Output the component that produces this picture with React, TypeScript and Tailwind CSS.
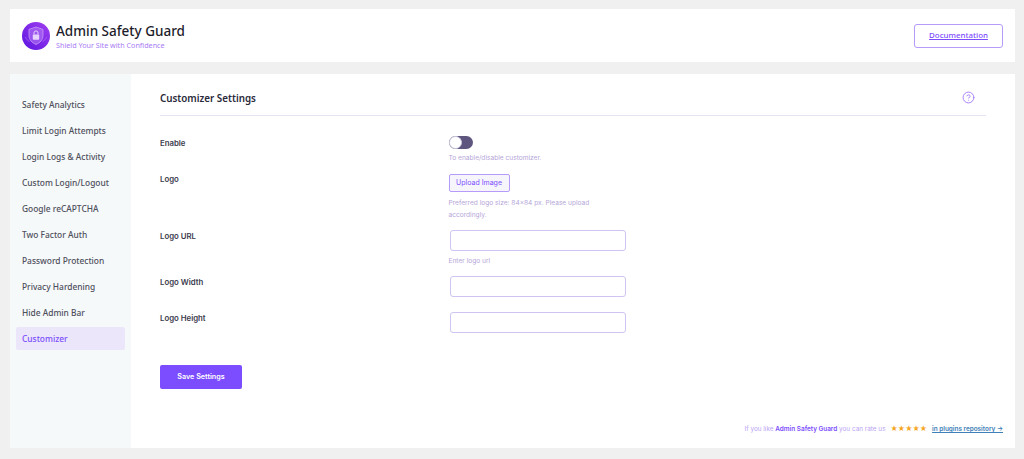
import { CircleHelp } from "lucide-react";

const menuItems = [
  "Safety Analytics",
  "Limit Login Attempts",
  "Login Logs & Activity",
  "Custom Login/Logout",
  "Google reCAPTCHA",
  "Two Factor Auth",
  "Password Protection",
  "Privacy Hardening",
  "Hide Admin Bar",
  "Customizer",
];

const Logo = () => (
  <svg viewBox="0 0 28 28" className="size-7 shrink-0">
    <defs>
      <linearGradient id="logoBg" x1="0" y1="1" x2="1" y2="0">
        <stop offset="0" stopColor="#5b14e0" />
        <stop offset="1" stopColor="#a13ff0" />
      </linearGradient>
    </defs>
    <circle cx="14" cy="14" r="14" fill="url(#logoBg)" />
    <path d="M14 5l7 2.4v6c0 4.4-3 7.4-7 9-4-1.600-7-4.600-7-9v-6z" fill="#b57af5" fillOpacity="0.55" stroke="#c99bf8" strokeWidth="0.8" />
    <rect x="10.800" y="12.500" width="6.400" height="5.200" rx="0.800" fill="#e6d4fc" />
    <path d="M12 12.500v-1.600a2 2 0 0 1 4 0v1.600" fill="none" stroke="#e6d4fc" strokeWidth="1" />
    <path d="M3.500 15c1 2.500 2 3.500 4 4.500M24.500 15c-1 2.500-2 3.500-4 4.500" fill="none" stroke="#b57af5" strokeWidth="0.6" />
  </svg>
);

const Field = ({ label, hint, mb }: { label: string; hint?: string; mb: string }) => (
  <div className={`flex ${mb}`}>
    <div className="w-[289.500px] -mt-[1px] text-[7.800px] leading-[14px] font-semibold font-['Inter',sans-serif] text-[#3a3a4c]">{label}</div>
    <div>
      <div className="w-[176px] h-[21px] bg-white border border-[#cfc4f2] rounded-[3px]" />
      {hint && <p className="mt-[4px] -ml-px text-[6.600px] leading-[12px] font-['Inter',sans-serif] text-[#b5a6d8]">{hint}</p>}
    </div>
  </div>
);

export default function App() {
  return (
    <div className="min-h-[459px] bg-[#f0f0f0] pt-[9px] pl-[10px] pr-[9px] font-['Noto_Sans',sans-serif]">
      <header className="flex items-center justify-between h-[53px] bg-white pl-[12px] pr-[12px] mb-[12px]">
        <div className="flex items-center gap-[6px]">
          <Logo />
          <div className="pt-[2px]">
            <h1 className="text-[13.500px] leading-[18px] font-medium text-[#1d1d2b]">Admin Safety Guard</h1>
            <p className="text-[7.200px] leading-[11px] text-[#a77bf5]">Shield Your Site with Confidence</p>
          </div>
        </div>
        <a className="flex items-center justify-center w-[89px] h-[24px] border border-[#b79bfb] rounded-[3px] text-[7.900px] font-medium text-[#7c4dff] underline">
          Documentation
        </a>
      </header>

      <main className="flex h-[374px] bg-white">
        <aside className="w-[121px] shrink-0 bg-[#f5f9fa] px-[6px] pt-[19px]">
          <ul className="flex flex-col gap-[3px]">
            {menuItems.map((item) =>
              item === "Customizer" ? (
                <li key={item} className="h-[23px] pl-[6px] pt-[2px] flex items-center rounded-[2px] bg-[#ebe6f9] text-[8.400px] font-medium text-[#7c4dff]">
                  {item}
                </li>
              ) : (
                <li key={item} className="h-[23px] pl-[6px] pt-[2px] flex items-center text-[8.400px] font-medium text-[#4f4f5c]">
                  {item}
                </li>
              )
            )}
          </ul>
        </aside>

        <section className="relative flex-1 pl-[29px] pr-[29px]">
          <div className="flex items-center justify-between h-[42px] border-b border-[#e6e3f2] pr-[11px]">
            <h2 className="text-[9.800px] font-semibold text-[#2a2a3a] pt-[9px]">Customizer Settings</h2>
            <CircleHelp className="size-[13px] mt-[6px] text-[#a67cff]" strokeWidth={1.750} />
          </div>

          <div className="flex pt-[20px] mb-[10px]">
            <div className="w-[289.500px] text-[7.800px] leading-[14px] font-semibold font-['Inter',sans-serif] text-[#3a3a4c]">Enable</div>
            <div className="-ml-px">
              <div className="relative w-[24px] h-[13px] rounded-full bg-[#5f5680]">
                <span className="absolute left-0 top-0 size-[13px] rounded-full bg-white border border-[#cfcbe0]" />
              </div>
              <p className="mt-[3px] text-[6.600px] leading-[12px] font-['Inter',sans-serif] text-[#b5a6d8]">To enable/disable customizer.</p>
            </div>
          </div>

          <div className="flex mb-[9px]">
            <div className="w-[289.500px] -mt-[2px] text-[7.800px] leading-[14px] font-semibold font-['Inter',sans-serif] text-[#3a3a4c]">Logo</div>
            <div className="w-[176px] -ml-px">
              <button className="h-[18px] w-[61px] block bg-[#f6f5fc] border border-[#b79bfb] rounded-[2px] text-[7px] font-['Inter',sans-serif] text-[#7c4dff] whitespace-nowrap">
                Upload Image
              </button>
              <p className="mt-[5px] w-[150px] text-[6.600px] leading-[12px] font-['Inter',sans-serif] text-[#b5a6d8]">
                Preferred logo size: 84×84 px. Please upload accordingly.
              </p>
            </div>
          </div>

          <Field label="Logo URL" hint="Enter logo url" mb="mb-[9px]" />
          <Field label="Logo Width" mb="mb-[15px]" />
          <Field label="Logo Height" mb="mb-[32px]" />

          <button className="w-[82px] h-[24px] block rounded-[2px] bg-[#7c4dff] text-[7.200px] font-semibold font-['Inter',sans-serif] text-white">
            Save Settings
          </button>

          <p className="absolute right-[12px] bottom-[13px] flex items-center text-[6.400px] leading-[12px] font-['Inter',sans-serif] text-[#b9a3f5]">
            If you like&nbsp;<span className="font-semibold text-[#7c4dff]">Admin Safety Guard</span>&nbsp;you can rate us
            <span className="ml-[5px] text-[#f5a623] text-[7px]">★★★★★</span>
            <a className="ml-[5px] font-semibold text-[#3f7fb8] underline">in plugins repository →</a>
          </p>
        </section>
      </main>
    </div>
  );
}
